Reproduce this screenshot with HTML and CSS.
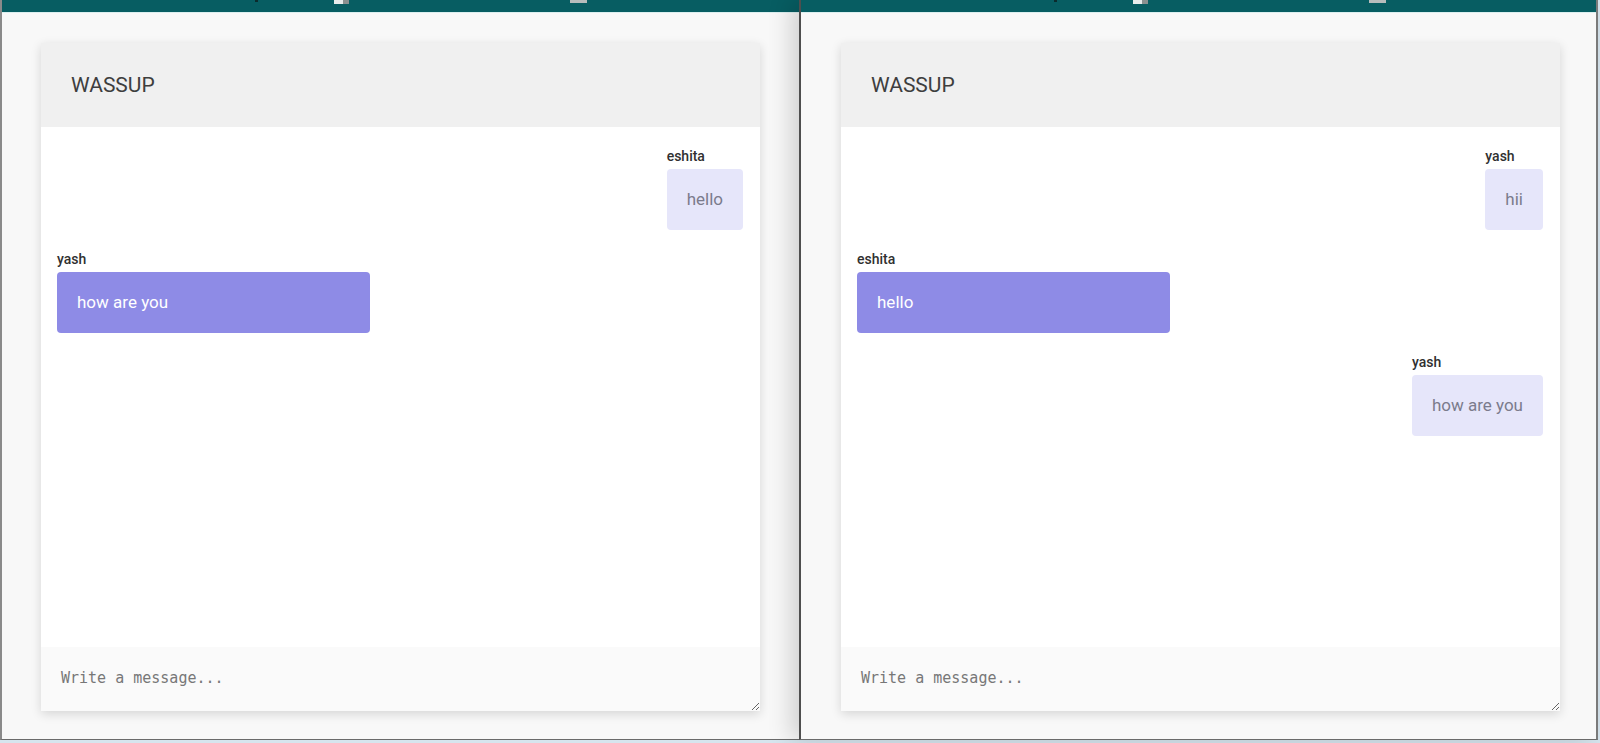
FILE: index.html
```html
<!DOCTYPE html>
<html>
<head>
<meta charset="utf-8">
<link rel="stylesheet" href="styles.css">
</head>
<body>
<div class="screen">
  <div class="window win-left">
    <div class="topbar">
      <span class="tb-dot"></span>
      <span class="tb-icon tb-a"></span>
      <span class="tb-icon tb-b"></span>
    </div>
    <div class="page">
      <div class="card">
        <div class="card-head">WASSUP</div>
        <div class="messages">
          <div class="msg sent">
            <div class="name">eshita</div>
            <div class="bubble">hello</div>
          </div>
          <div class="msg recv">
            <div class="name">yash</div>
            <div class="bubble">how are you</div>
          </div>
        </div>
        <div class="compose">
          <textarea class="input" placeholder="Write a message..."></textarea>
        </div>
      </div>
    </div>
  </div>
  <div class="window win-right">
    <div class="topbar">
      <span class="tb-dot"></span>
      <span class="tb-icon tb-a"></span>
      <span class="tb-icon tb-b"></span>
    </div>
    <div class="page">
      <div class="card">
        <div class="card-head">WASSUP</div>
        <div class="messages">
          <div class="msg sent">
            <div class="name">yash</div>
            <div class="bubble">hii</div>
          </div>
          <div class="msg recv">
            <div class="name">eshita</div>
            <div class="bubble">hello</div>
          </div>
          <div class="msg sent">
            <div class="name">yash</div>
            <div class="bubble">how are you</div>
          </div>
        </div>
        <div class="compose">
          <textarea class="input" placeholder="Write a message..."></textarea>
        </div>
      </div>
    </div>
  </div>
</div>
</body>
</html>
```
FILE: styles.css
```css
html, body {
  margin: 0;
  padding: 0;
}
body {
  width: 1600px;
  height: 743px;
  overflow: hidden;
  background: #d6e5ee;
  font-family: Roboto, "Liberation Sans", sans-serif;
}
.screen {
  display: flex;
  height: 740px;
}
.window {
  position: relative;
  display: flex;
  flex-direction: column;
  background: #f8f8f8;
  border-bottom: 1px solid #6a6a6a;
  box-sizing: border-box;
  height: 740px;
}
.win-left {
  width: 799px;
  border-left: 2px solid #8a8a8a;
}
.win-right {
  width: 799px;
  border-left: 2px solid #4e4e4e;
  border-right: 2px solid #7a7a7a;
  box-shadow: -8px 0 22px rgba(0, 0, 0, 0.16);
  z-index: 1;
}
.topbar {
  height: 12px;
  flex: none;
  background: #075d62;
  border-bottom: 1px solid #dcefef;
  display: flex;
  align-items: flex-start;
}
.tb-dot {
  width: 3px;
  height: 2px;
  background: #0b2b2d;
  margin-left: 253px;
}
.tb-icon {
  height: 4px;
  background: #c9cfd0;
}
.tb-a {
  width: 15px;
  margin-left: 76px;
  background: linear-gradient(90deg, #e8ecec 0 60%, #8a9090 60% 100%);
}
.tb-b {
  width: 17px;
  height: 3px;
  margin-left: 221px;
  background: #b7bcbc;
}
.page {
  flex: 1;
  padding: 30px 0 0 39px;
}
.win-right .page {
  padding-left: 40px;
}
.card {
  width: 719px;
  display: flex;
  flex-direction: column;
  box-shadow: 0 3px 10px rgba(0, 0, 0, 0.14);
}
.card-head {
  height: 84px;
  background: #f0f0f0;
  color: #3e3e3e;
  font-size: 21px;
  font-weight: 400;
  display: flex;
  align-items: center;
  padding-left: 30px;
}
.messages {
  height: 520px;
  box-sizing: border-box;
  background: #ffffff;
  padding: 21px 17px 0 16px;
  display: flex;
  flex-direction: column;
}
.msg {
  display: flex;
  flex-direction: column;
  margin-bottom: 21px;
}
.msg.sent {
  align-self: flex-end;
}
.msg.recv {
  align-self: flex-start;
}
.name {
  font-size: 14px;
  font-weight: 500;
  line-height: 17px;
  color: #303030;
  margin-bottom: 4px;
}
.bubble {
  font-size: 17px;
  line-height: 21px;
  padding: 20px;
  border-radius: 4px;
}
.sent .bubble {
  background: #e6e6fa;
  color: #7b7b8c;
}
.recv .bubble {
  width: 313px;
  box-sizing: border-box;
  background: #8e8be6;
  color: #ffffff;
}
.compose {
  height: 64px;
  background: #fafafa;
  display: flex;
}
.input {
  flex: 1;
  height: 64px;
  box-sizing: border-box;
  border: none;
  outline: none;
  background: #fafafa;
  padding: 22px 20px 0 20px;
  font-family: "DejaVu Sans Mono", "Liberation Mono", monospace;
  font-size: 15px;
  line-height: 18px;
  color: #333;
  resize: both;
}
.input::placeholder {
  color: #777777;
}
```
